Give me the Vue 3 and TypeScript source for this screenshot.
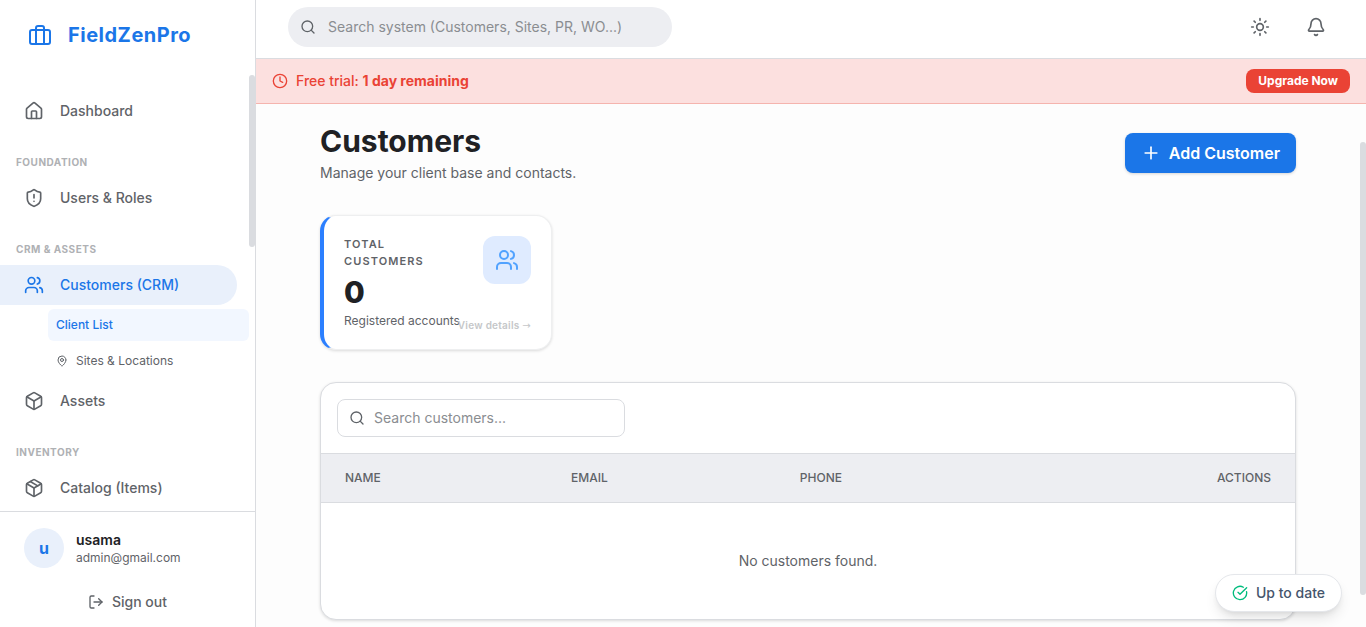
<script setup lang="ts">
import { ref } from 'vue'

type IconName =
  | 'briefcase' | 'home' | 'shield' | 'users' | 'pin' | 'box' | 'package'
  | 'logout' | 'search' | 'sun' | 'bell' | 'clock' | 'plus' | 'check'

const icons: Record<IconName, string> = {
  briefcase: '<rect x="2" y="7" width="20" height="14" rx="2"/><path d="M16 21V5a2 2 0 0 0-2-2h-4a2 2 0 0 0-2 2v16"/>',
  home: '<path d="M15 21v-8a1 1 0 0 0-1-1h-4a1 1 0 0 0-1 1v8"/><path d="M3 10a2 2 0 0 1 .709-1.528l7-5.999a2 2 0 0 1 2.582 0l7 5.999A2 2 0 0 1 21 10v9a2 2 0 0 1-2 2H5a2 2 0 0 1-2-2z"/>',
  shield: '<path d="M20 13c0 5-3.5 7.5-7.66 8.95a1 1 0 0 1-.67-.01C7.5 20.5 4 18 4 13V6a1 1 0 0 1 1-1c2 0 4.500-1.200 6.240-2.720a1.170 1.170 0 0 1 1.520 0C14.510 3.810 17 5 19 5a1 1 0 0 1 1 1z"/><path d="M12 8v4"/><path d="M12 16h.01"/>',
  users: '<path d="M16 21v-2a4 4 0 0 0-4-4H6a4 4 0 0 0-4 4v2"/><circle cx="9" cy="7" r="4"/><path d="M22 21v-2a4 4 0 0 0-3-3.870"/><path d="M16 3.130a4 4 0 0 1 0 7.750"/>',
  pin: '<path d="M20 10c0 4.993-5.539 10.193-7.399 11.799a1 1 0 0 1-1.202 0C9.539 20.193 4 14.993 4 10a8 8 0 0 1 16 0"/><circle cx="12" cy="10" r="3"/>',
  box: '<path d="M21 8a2 2 0 0 0-1-1.730l-7-4a2 2 0 0 0-2 0l-7 4A2 2 0 0 0 3 8v8a2 2 0 0 0 1 1.730l7 4a2 2 0 0 0 2 0l7-4A2 2 0 0 0 21 16Z"/><path d="m3.300 7 8.700 5 8.700-5"/><path d="M12 22V12"/>',
  package: '<path d="M11 21.730a2 2 0 0 0 2 0l7-4A2 2 0 0 0 21 16V8a2 2 0 0 0-1-1.730l-7-4a2 2 0 0 0-2 0l-7 4A2 2 0 0 0 3 8v8a2 2 0 0 0 1 1.730z"/><path d="M12 22V12"/><path d="m3.300 7 8.700 5 8.700-5"/><path d="m7.500 4.270 9 5.150"/>',
  logout: '<path d="M9 21H5a2 2 0 0 1-2-2V5a2 2 0 0 1 2-2h4"/><path d="m16 17 5-5-5-5"/><path d="M21 12H9"/>',
  search: '<circle cx="11" cy="11" r="8"/><path d="m21 21-4.300-4.300"/>',
  sun: '<circle cx="12" cy="12" r="4"/><path d="M12 2v2M12 20v2M4.930 4.930l1.410 1.410M17.660 17.660l1.410 1.410M2 12h2M20 12h2M6.340 17.660l-1.410 1.410M19.070 4.930l-1.410 1.410"/>',
  bell: '<path d="M10.268 21a2 2 0 0 0 3.464 0"/><path d="M3.262 15.326A1 1 0 0 0 4 17h16a1 1 0 0 0 .740-1.673C19.410 13.956 18 12.499 18 8A6 6 0 0 0 6 8c0 4.499-1.411 5.956-2.738 7.326"/>',
  clock: '<circle cx="12" cy="12" r="10"/><path d="M12 6v6l4 2"/>',
  plus: '<path d="M5 12h14"/><path d="M12 5v14"/>',
  check: '<path d="M21.801 10A10 10 0 1 1 17 3.335"/><path d="m9 11 3 3L22 4"/>',
}

interface NavItem {
  label: string
  icon: IconName
  active?: boolean
  children?: { label: string; icon?: IconName; active?: boolean }[]
}

const groups: { title?: string; items: NavItem[] }[] = [
  { items: [{ label: 'Dashboard', icon: 'home' }] },
  { title: 'Foundation', items: [{ label: 'Users & Roles', icon: 'shield' }] },
  {
    title: 'CRM & Assets',
    items: [
      {
        label: 'Customers (CRM)',
        icon: 'users',
        active: true,
        children: [
          { label: 'Client List', active: true },
          { label: 'Sites & Locations', icon: 'pin' },
        ],
      },
      { label: 'Assets', icon: 'box' },
    ],
  },
  { title: 'Inventory', items: [{ label: 'Catalog (Items)', icon: 'package' }] },
]

const systemQuery = ref('')
const customerQuery = ref('')
</script>

<template>
  <div class="shell">
    <aside class="sidebar">
      <a class="brand" href="#">
        <svg class="icon i24" viewBox="0 0 24 24" aria-hidden="true" v-html="icons.briefcase" />
        <span>FieldZenPro</span>
      </a>

      <div class="nav-area">
        <nav class="nav" aria-label="Main">
          <template v-for="group in groups" :key="group.title ?? 'main'">
            <h2 v-if="group.title" class="group-title">{{ group.title }}</h2>
            <template v-for="item in group.items" :key="item.label">
              <a class="nav-item" :class="{ active: item.active }" href="#">
                <svg class="icon i20" viewBox="0 0 24 24" aria-hidden="true" v-html="icons[item.icon]" />
                <span>{{ item.label }}</span>
              </a>
              <div v-if="item.children" class="sub-nav">
                <a
                  v-for="child in item.children"
                  :key="child.label"
                  class="sub-item"
                  :class="{ active: child.active }"
                  href="#"
                >
                  <svg v-if="child.icon" class="icon i12" viewBox="0 0 24 24" aria-hidden="true" v-html="icons[child.icon]" />
                  <span>{{ child.label }}</span>
                </a>
              </div>
            </template>
          </template>
        </nav>
        <span class="thumb nav-thumb" aria-hidden="true"></span>
      </div>

      <div class="account">
        <div class="profile">
          <span class="avatar">u</span>
          <div class="who">
            <strong>usama</strong>
            <span>admin@gmail.com</span>
          </div>
        </div>
        <button class="sign-out" type="button">
          <svg class="icon i16" viewBox="0 0 24 24" aria-hidden="true" v-html="icons.logout" />
          Sign out
        </button>
      </div>
    </aside>

    <div class="main">
      <header class="topbar">
        <label class="system-search">
          <svg class="icon i16" viewBox="0 0 24 24" aria-hidden="true" v-html="icons.search" />
          <input
            v-model="systemQuery"
            type="text"
            aria-label="Search system"
            placeholder="Search system (Customers, Sites, PR, WO...)"
          />
        </label>
        <div class="tools">
          <button class="tool" type="button" aria-label="Toggle theme">
            <svg class="icon i20" viewBox="0 0 24 24" aria-hidden="true" v-html="icons.sun" />
          </button>
          <button class="tool" type="button" aria-label="Notifications">
            <svg class="icon i20" viewBox="0 0 24 24" aria-hidden="true" v-html="icons.bell" />
          </button>
        </div>
      </header>

      <div class="trial">
        <svg class="icon i16" viewBox="0 0 24 24" aria-hidden="true" v-html="icons.clock" />
        <p>Free trial: <strong>1 day remaining</strong></p>
        <button class="upgrade" type="button">Upgrade Now</button>
      </div>

      <div class="scroll-area">
        <main class="content">
          <div class="page-head">
            <div>
              <h1>Customers</h1>
              <p>Manage your client base and contacts.</p>
            </div>
            <button class="add" type="button">
              <svg class="icon i20" viewBox="0 0 24 24" aria-hidden="true" v-html="icons.plus" />
              Add Customer
            </button>
          </div>

          <div class="stats">
            <section class="stat">
              <div class="stat-text">
                <h3>Total Customers</h3>
                <p class="value">0</p>
                <p class="note">Registered accounts</p>
              </div>
              <span class="stat-icon">
                <svg class="icon i24" viewBox="0 0 24 24" aria-hidden="true" v-html="icons.users" />
              </span>
              <a class="details" href="#">View details <span class="arrow">→</span></a>
            </section>
          </div>

          <section class="panel">
            <div class="filter">
              <label class="customer-search">
                <svg class="icon i16" viewBox="0 0 24 24" aria-hidden="true" v-html="icons.search" />
                <input v-model="customerQuery" type="text" aria-label="Search customers" placeholder="Search customers..." />
              </label>
            </div>
            <table>
              <thead>
                <tr>
                  <th class="name">Name</th>
                  <th class="email">Email</th>
                  <th>Phone</th>
                  <th class="actions">Actions</th>
                </tr>
              </thead>
              <tbody>
                <tr>
                  <td colspan="4">No customers found.</td>
                </tr>
              </tbody>
            </table>
          </section>
        </main>
        <span class="thumb page-thumb" aria-hidden="true"></span>
      </div>
    </div>

    <div class="toast" role="status">
      <svg class="icon i16" viewBox="0 0 24 24" aria-hidden="true" v-html="icons.check" />
      <span>Up to date</span>
    </div>
  </div>
</template>

<style>
body {
  margin: 0;
  background: #fdfdfd;
}
</style>

<style scoped>
* {
  box-sizing: border-box;
}

.shell {
  display: flex;
  height: 100vh;
  overflow: hidden;
  background: #fdfdfd;
  color: #5f6368;
  font-family: Inter, "Liberation Sans", sans-serif;
  font-size: 14px;
  line-height: 20px;
}

h1, h2, h3, p {
  margin: 0;
}

a {
  color: inherit;
  text-decoration: none;
}

button, input {
  border: 0;
  padding: 0;
  background: none;
  color: inherit;
  font: inherit;
}

button {
  cursor: pointer;
}

.icon {
  flex: none;
  fill: none;
  stroke: currentColor;
  stroke-width: 2;
  stroke-linecap: round;
  stroke-linejoin: round;
}

.i12 { width: 12px; height: 12px; }
.i16 { width: 16px; height: 16px; }
.i20 { width: 20px; height: 20px; }
.i24 { width: 24px; height: 24px; }

.thumb {
  position: absolute;
  right: 0;
  width: 6px;
  border-radius: 3px;
  background: #dadce0;
}

/* Sidebar */
.sidebar {
  display: flex;
  flex: none;
  flex-direction: column;
  width: 256px;
  border-right: 1px solid #dadce0;
  background: #fff;
}

.brand {
  display: flex;
  flex: none;
  align-items: center;
  gap: 16px;
  height: 75px;
  padding: 0 28px 6px;
  color: #1b76e8;
  font-size: 20px;
  font-weight: 700;
  letter-spacing: 0.5px;
}

.nav-area {
  position: relative;
  flex: 1;
  min-height: 0;
  overflow: hidden;
}

.nav {
  padding: 16px 6px 16px 0;
}

.nav-thumb {
  top: 0;
  height: 172px;
}

.group-title {
  padding: 24px 16px 8px;
  color: #afb1b4;
  font-size: 10px;
  font-weight: 700;
  line-height: 15px;
  letter-spacing: 0.5px;
  text-transform: uppercase;
}

.nav-item {
  display: flex;
  align-items: center;
  gap: 16px;
  height: 40px;
  margin-right: 12px;
  padding: 0 24px;
  border-radius: 0 20px 20px 0;
  font-weight: 500;
}

.nav-item.active {
  background: #e9f0fb;
  color: #1b76e8;
}

.sub-nav {
  display: flex;
  flex-direction: column;
  gap: 4px;
  padding: 4px 0 4px 48px;
}

.sub-item {
  display: flex;
  align-items: center;
  gap: 8px;
  height: 32px;
  padding: 0 8px;
  border-radius: 6px;
  font-size: 12px;
}

.sub-item.active {
  background: #f2f7ff;
  color: #1b76e8;
  font-weight: 500;
}

.account {
  display: flex;
  flex: none;
  flex-direction: column;
  gap: 16px;
  padding: 16px 24px 7px;
  border-top: 1px solid #dadce0;
}

.profile {
  display: flex;
  align-items: center;
  gap: 12px;
}

.avatar {
  display: flex;
  flex: none;
  align-items: center;
  justify-content: center;
  width: 40px;
  height: 40px;
  border-radius: 50%;
  background: #e9f0fb;
  color: #1b76e8;
  font-size: 16px;
  font-weight: 700;
}

.who {
  display: flex;
  flex-direction: column;
  font-size: 12px;
  line-height: 16px;
}

.who strong {
  color: #202124;
  font-size: 14px;
  font-weight: 600;
  line-height: 20px;
}

.sign-out {
  display: flex;
  align-items: center;
  justify-content: center;
  gap: 8px;
  height: 36px;
  font-weight: 500;
}

/* Top area */
.main {
  display: flex;
  flex: 1;
  flex-direction: column;
  min-width: 0;
}

.topbar {
  display: flex;
  flex: none;
  align-items: center;
  justify-content: space-between;
  padding: 7px 32px 11px;
  border-bottom: 1px solid #dadce0;
  background: #fff;
}

.system-search {
  display: flex;
  align-items: center;
  gap: 12px;
  width: 384px;
  height: 40px;
  padding: 0 12px;
  border-radius: 20px;
  background: #edeef2;
}

input {
  flex: 1;
  min-width: 0;
  outline: none;
}

input::placeholder {
  color: #8a8d91;
  opacity: 1;
}

.tools {
  display: flex;
  gap: 20px;
}

.tool {
  display: flex;
  align-items: center;
  justify-content: center;
  width: 36px;
  height: 36px;
  border-radius: 50%;
}

.trial {
  display: flex;
  flex: none;
  align-items: center;
  gap: 8px;
  padding: 10px 16px;
  border-bottom: 1px solid #f5b4ae;
  background: #fce0df;
  color: #ea4335;
  font-weight: 500;
}

.trial strong {
  font-weight: 700;
}

.upgrade {
  height: 24px;
  margin-left: auto;
  padding: 0 12px;
  border-radius: 8px;
  background: #ea4335;
  color: #fff;
  font-size: 12px;
  font-weight: 700;
}

/* Page */
.scroll-area {
  position: relative;
  flex: 1;
  min-height: 0;
  overflow: hidden;
}

.page-thumb {
  top: 38px;
  bottom: 32px;
}

.content {
  display: flex;
  flex-direction: column;
  gap: 32px;
  padding: 19px 70px 32px 64px;
}

.page-head {
  display: flex;
  align-items: center;
  justify-content: space-between;
}

h1 {
  margin-bottom: 4px;
  color: #202124;
  font-size: 30px;
  font-weight: 700;
  line-height: 36px;
}

.add {
  display: flex;
  align-items: center;
  gap: 8px;
  height: 40px;
  padding: 0 16px;
  border-radius: 8px;
  background: #1b76e8;
  box-shadow: 0 1px 3px rgba(0, 0, 0, 0.16);
  color: #fff;
  font-size: 16px;
  font-weight: 600;
}

.stats {
  display: grid;
  grid-template-columns: repeat(4, 1fr);
  gap: 16px;
}

.stat {
  position: relative;
  display: flex;
  align-items: flex-start;
  justify-content: space-between;
  padding: 20px;
  border: 1px solid #eeeff0;
  border-left: 4px solid #2b7fff;
  border-radius: 16px;
  background: #fff;
  box-shadow: 0 1px 3px rgba(0, 0, 0, 0.14);
}

.stat-text {
  flex: 1;
  min-width: 0;
}

h3 {
  width: min-content;
  margin-bottom: 4px;
  font-size: 11px;
  font-weight: 600;
  line-height: 17px;
  letter-spacing: 0.1em;
  text-transform: uppercase;
}

.value {
  color: #202124;
  font-size: 30px;
  font-weight: 800;
  line-height: 36px;
}

.note {
  margin-top: 3px;
  font-size: 12px;
  line-height: 16px;
  white-space: nowrap;
}

.stat-icon {
  display: flex;
  flex: none;
  align-items: center;
  justify-content: center;
  width: 48px;
  height: 48px;
  border-radius: 12px;
  background: #dfebff;
  color: #51a2ff;
}

.details {
  position: absolute;
  right: 20px;
  bottom: 16px;
  color: #c5c7c9;
  font-size: 10px;
  font-weight: 600;
  line-height: 15px;
  letter-spacing: 0.025em;
}

.arrow {
  font-family: "DejaVu Sans", sans-serif;
  font-weight: 400;
}

.panel {
  overflow: hidden;
  border: 1px solid #dadce0;
  border-radius: 16px;
  background: #fff;
  box-shadow: 0 1px 3px rgba(0, 0, 0, 0.14);
}

.filter {
  padding: 16px;
}

.customer-search {
  display: flex;
  align-items: center;
  gap: 9px;
  width: 288px;
  height: 38px;
  padding: 0 11px;
  border: 1px solid #dadce0;
  border-radius: 8px;
}

table {
  width: 100%;
  border-collapse: separate;
  border-spacing: 0;
  table-layout: fixed;
}

th {
  height: 50px;
  padding: 0 24px;
  border-top: 1px solid #dadce0;
  border-bottom: 1px solid #dadce0;
  background: #edeef2;
  font-size: 12px;
  font-weight: 500;
  text-align: left;
  text-transform: uppercase;
}

.name {
  width: 23.2%;
}

.email {
  width: 23.5%;
}

th.actions {
  text-align: right;
}

td {
  padding: 48px 24px;
  text-align: center;
}

.toast {
  position: absolute;
  right: 24px;
  bottom: 15px;
  display: flex;
  align-items: center;
  gap: 8px;
  height: 38px;
  padding: 0 16px;
  border: 1px solid #e5e7eb;
  border-radius: 19px;
  background: #fff;
  box-shadow: 0 8px 14px -3px rgba(0, 0, 0, 0.12), 0 3px 6px -3px rgba(0, 0, 0, 0.1);
  color: #45556c;
  font-weight: 500;
}

.toast .icon {
  color: #00bc7d;
}
</style>
